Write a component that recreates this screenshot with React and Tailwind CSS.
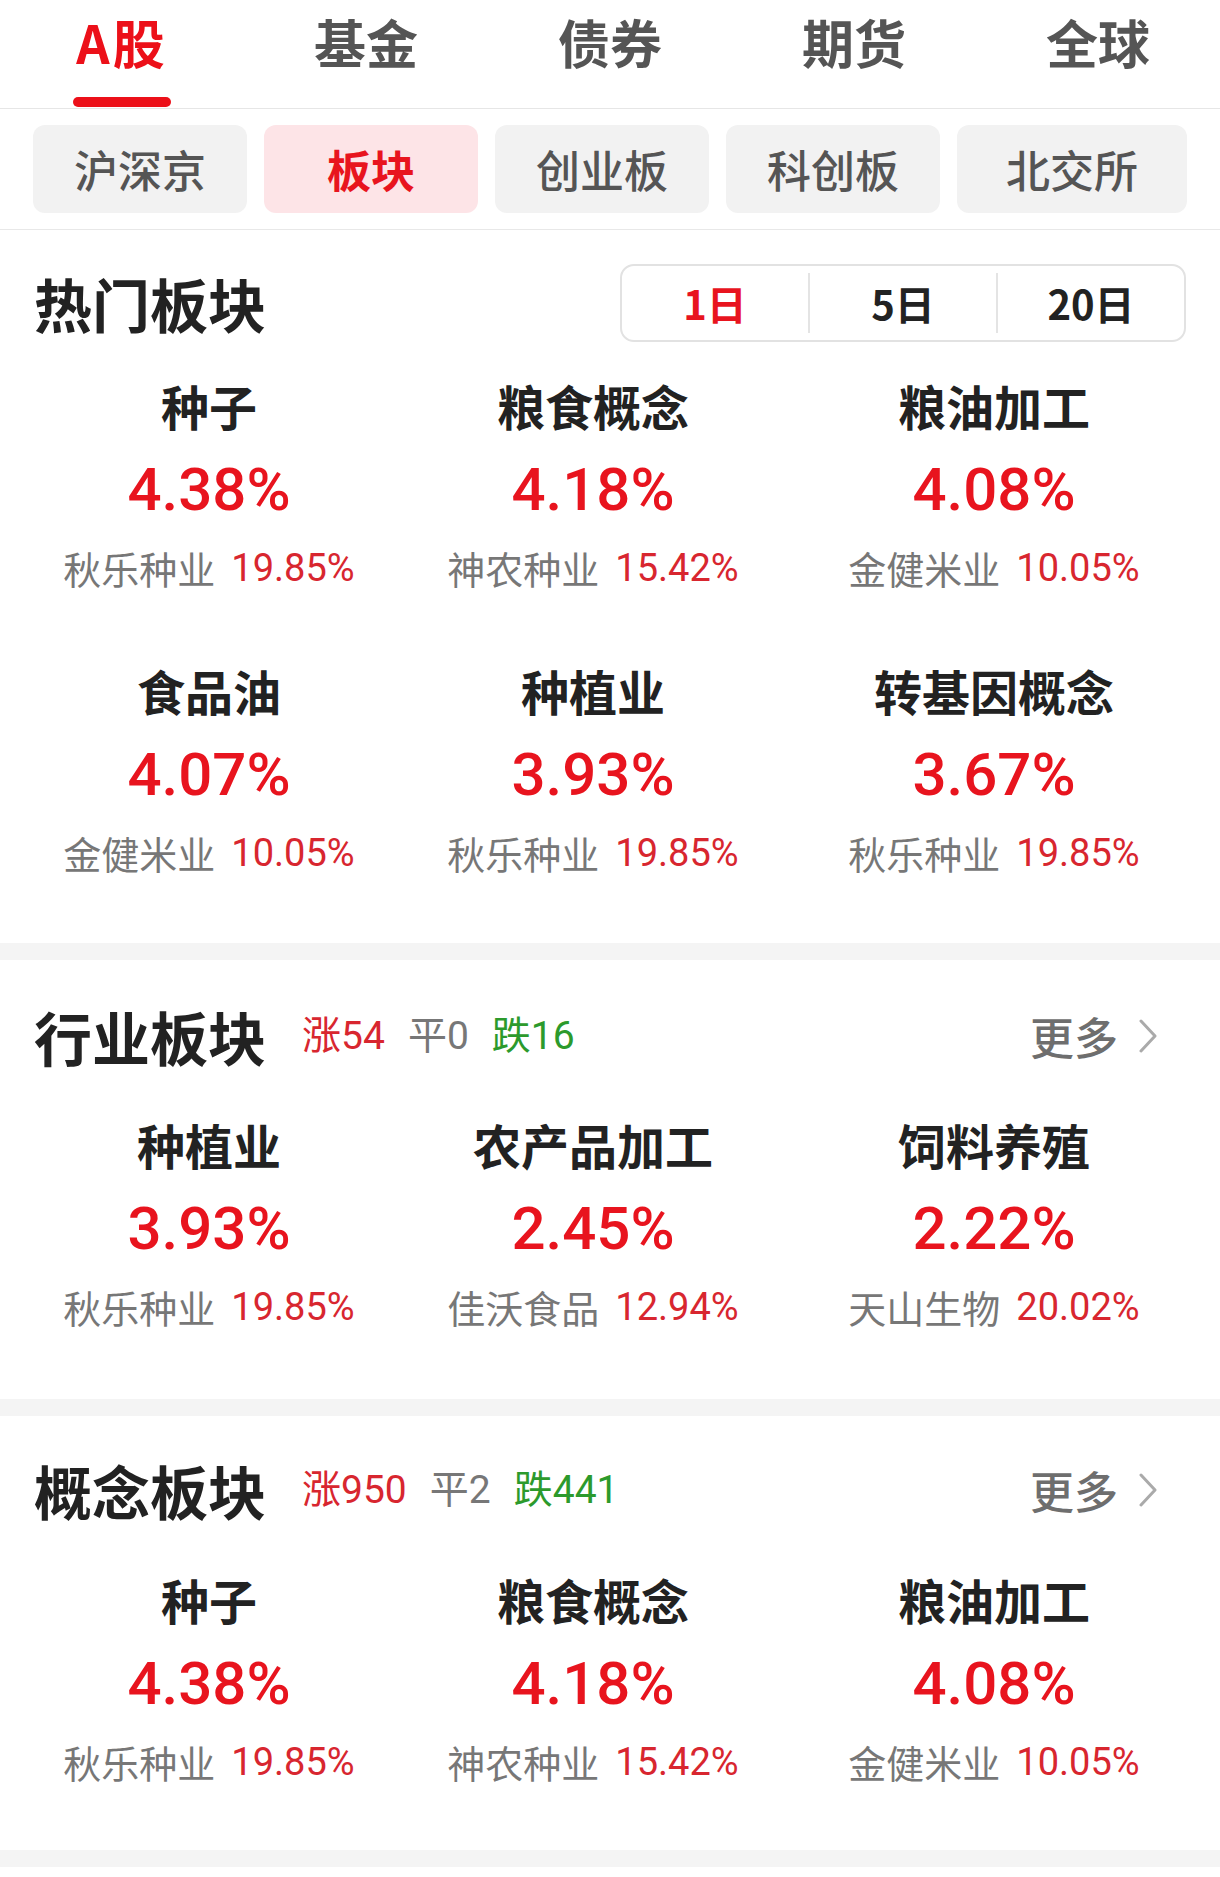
import React from 'react';

const CJK = '"Noto Sans CJK SC", "Noto Sans", sans-serif';
const NUM = 'Roboto, "Noto Sans CJK SC", sans-serif';

const topTabs = ['A股', '基金', '债券', '期货', '全球'];
const subTabs = ['沪深京', '板块', '创业板', '科创板', '北交所'];

const hotItems = [
  { name: '种子', pct: '4.38%', stock: '秋乐种业', sp: '19.85%' },
  { name: '粮食概念', pct: '4.18%', stock: '神农种业', sp: '15.42%' },
  { name: '粮油加工', pct: '4.08%', stock: '金健米业', sp: '10.05%' },
  { name: '食品油', pct: '4.07%', stock: '金健米业', sp: '10.05%' },
  { name: '种植业', pct: '3.93%', stock: '秋乐种业', sp: '19.85%' },
  { name: '转基因概念', pct: '3.67%', stock: '秋乐种业', sp: '19.85%' },
];

const industryItems = [
  { name: '种植业', pct: '3.93%', stock: '秋乐种业', sp: '19.85%' },
  { name: '农产品加工', pct: '2.45%', stock: '佳沃食品', sp: '12.94%' },
  { name: '饲料养殖', pct: '2.22%', stock: '天山生物', sp: '20.02%' },
];

const conceptItems = [
  { name: '种子', pct: '4.38%', stock: '秋乐种业', sp: '19.85%' },
  { name: '粮食概念', pct: '4.18%', stock: '神农种业', sp: '15.42%' },
  { name: '粮油加工', pct: '4.08%', stock: '金健米业', sp: '10.05%' },
];

// 单个板块格子
const Cell = ({ item }) => (
  <div className="flex flex-col items-center">
    <div className="text-[48px] leading-[48px] font-bold text-[#222]" style={{ fontFamily: CJK }}>
      {item.name}
    </div>
    <div className="mt-[31px] text-[60px] leading-[60px] font-medium text-[#e8141e]" style={{ fontFamily: NUM }}>
      {item.pct}
    </div>
    <div className="mt-[29px] flex items-center text-[38px] leading-[38px] whitespace-nowrap">
      <span className="text-[#777]" style={{ fontFamily: CJK }}>{item.stock}</span>
      <span className="ml-[16px] text-[#d8262f]" style={{ fontFamily: NUM }}>{item.sp}</span>
    </div>
  </div>
);

const Grid = ({ items, className }) => (
  <div className={`grid grid-cols-[418px_350px_452px] gap-y-[79px] ${className}`}>
    {items.map((it, i) => (
      <Cell key={i} item={it} />
    ))}
  </div>
);

const Chevron = () => (
  <svg width="20" height="34" viewBox="0 0 20 34" fill="none">
    <path d="M3 2 L17 17 L3 32" stroke="#aaaaaa" strokeWidth="3" strokeLinecap="round" strokeLinejoin="round" />
  </svg>
);

const SectionHeader = ({ title, up, flat, down }) => (
  <div className="h-[78px] flex items-center pl-[34px] pr-[62px]">
    <div className="text-[58px] leading-[58px] font-bold text-[#222]" style={{ fontFamily: CJK }}>
      {title}
    </div>
    <div className="ml-[36px] flex items-center gap-[23px] text-[39px] leading-[39px]" style={{ fontFamily: NUM }}>
      <span className="text-[#d8262f]">涨{up}</span>
      <span className="text-[#777]">平{flat}</span>
      <span className="text-[#2c9a2c]">跌{down}</span>
    </div>
    <div className="ml-auto flex items-center">
      <span className="text-[44px] leading-[44px] font-medium text-[#6e6e6e]" style={{ fontFamily: CJK }}>
        更多
      </span>
      <span className="ml-[20px] flex items-center">
        <Chevron />
      </span>
    </div>
  </div>
);

const Separator = () => <div className="h-[17px] bg-[#f4f4f4]" />;

export default function App() {
  return (
    <div className="w-[1220px] h-[1877px] bg-white overflow-hidden" style={{ fontFamily: CJK }}>
      {/* 顶部市场切换 */}
      <div className="h-[109px] flex border-b border-[#e6e6e6]">
        {topTabs.map((t, i) => (
          <div key={t} className="flex-1 flex flex-col items-center">
            <div
              className={`mt-[16px] text-[52px] leading-[52px] font-bold ${i === 0 ? 'text-[#ec1019] tracking-[3px]' : 'text-[#555]'}`}
            >
              {t}
            </div>
            {i === 0 && <div className="mt-auto mb-[1px] h-[10px] w-[98px] rounded-full bg-[#ec1019]" />}
          </div>
        ))}
      </div>

      {/* 子分类 */}
      <div className="h-[121px] flex items-center gap-[17px] px-[33px] border-b border-[#e8e8e8]">
        {subTabs.map((t, i) => (
          <div
            key={t}
            className={`h-[88px] rounded-[12px] flex items-center justify-center text-[44px] leading-[44px] ${
              i === 4 ? 'flex-1' : 'w-[214px]'
            } ${i === 1 ? 'bg-[#fde4e7] text-[#e8141e] font-bold' : 'bg-[#f2f2f2] text-[#555] font-medium'}`}
          >
            {t}
          </div>
        ))}
      </div>

      {/* 热门板块 */}
      <div className="pt-[34px] pb-[71px]">
        <div className="h-[78px] flex items-center justify-between pl-[34px] pr-[34px]">
          <div className="text-[58px] leading-[58px] font-bold text-[#222]">热门板块</div>
          <div className="w-[566px] h-[78px] rounded-[14px] border-2 border-[#e2e2e2] flex items-center">
            {['1日', '5日', '20日'].map((d, i) => (
              <div
                key={d}
                className={`flex-1 h-[60px] flex items-center justify-center text-[40px] leading-[40px] font-bold ${
                  i > 0 ? 'border-l-2 border-[#e4e4e4]' : ''
                } ${i === 0 ? 'text-[#e8141e]' : 'text-[#222]'}`}
              >
                {d}
              </div>
            ))}
          </div>
        </div>
        <Grid items={hotItems} className="mt-[39px]" />
      </div>

      <Separator />

      {/* 行业板块 */}
      <div className="pt-[37px] pb-[73px]">
        <SectionHeader title="行业板块" up="54" flat="0" down="16" />
        <Grid items={industryItems} className="mt-[45px]" />
      </div>

      <Separator />

      {/* 概念板块 */}
      <div className="pt-[35px] pb-[69px]">
        <SectionHeader title="概念板块" up="950" flat="2" down="441" />
        <Grid items={conceptItems} className="mt-[46px]" />
      </div>

      <Separator />
    </div>
  );
}
